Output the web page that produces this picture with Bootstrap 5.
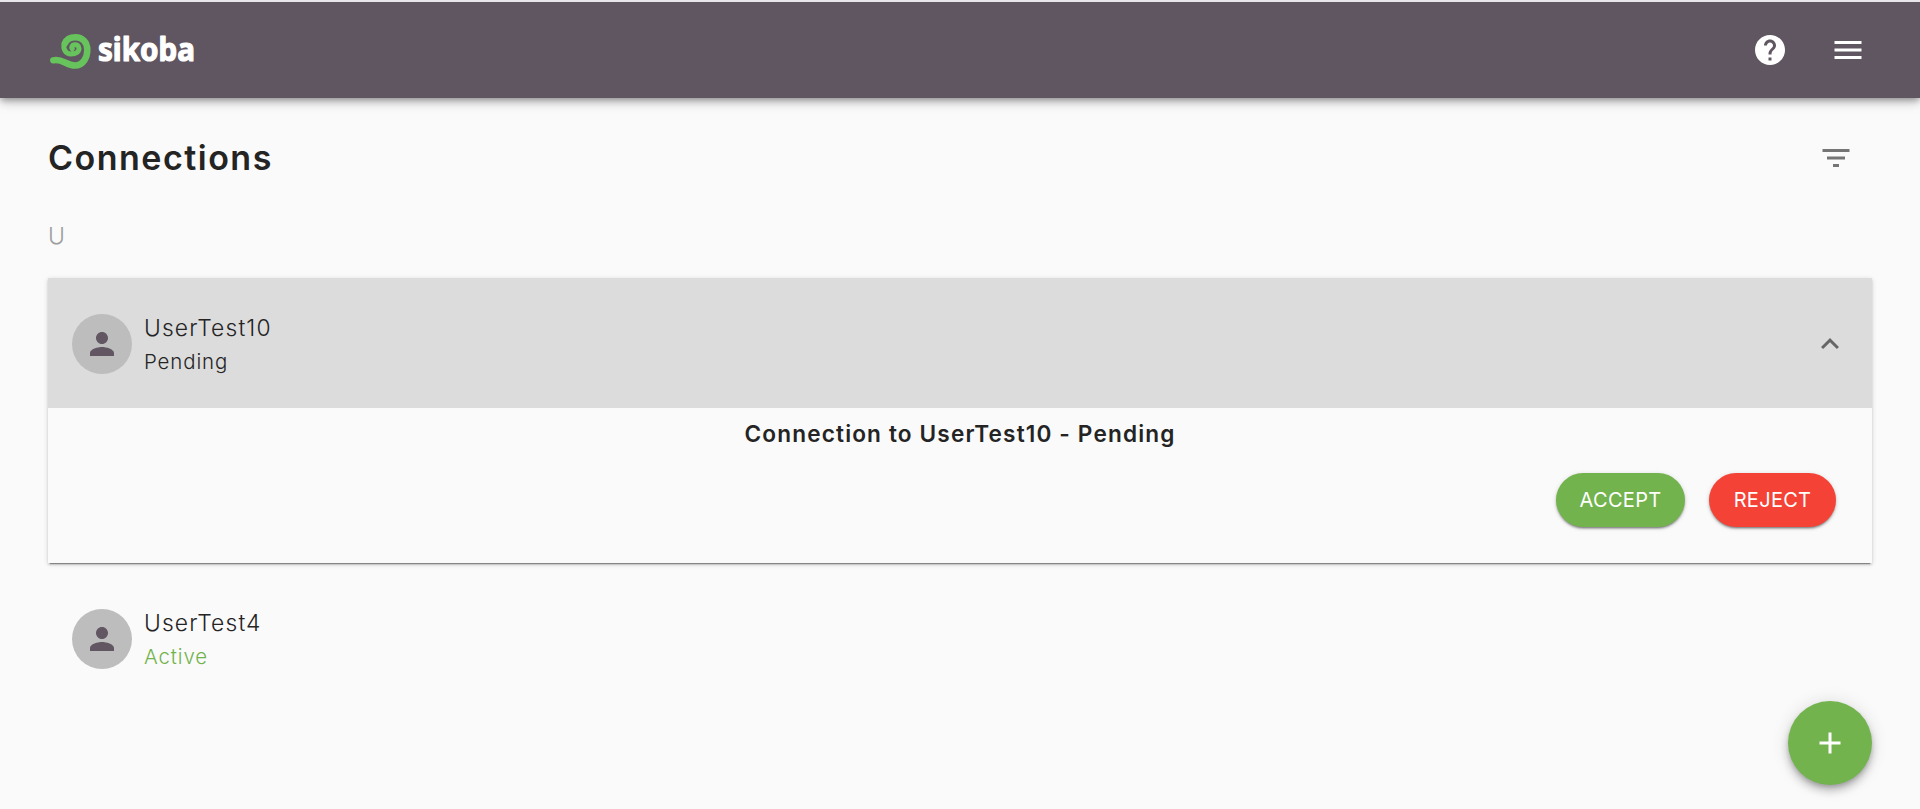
<!DOCTYPE html>
<html lang="en">
<head>
<meta charset="utf-8">
<meta name="viewport" content="width=device-width, initial-scale=1">
<title>Sikoba – Connections</title>
<link href="https://cdn.jsdelivr.net/npm/bootstrap@5.3.0/dist/css/bootstrap.min.css" rel="stylesheet">
<style>
body{background:#fafafa;color:#242424;font-family:Inter,"Noto Sans",sans-serif;height:100vh;overflow:hidden}
.icon36{width:36px;height:36px;fill:currentColor;display:block;flex:none}
.app-bar{height:98px;border-top:2px solid #e8e6ea;background:#605661;color:#fff;padding:0 54px 0 48px;
  box-shadow:0 3px 6px -1px rgba(0,0,0,.3),0 6px 10px rgba(0,0,0,.12),0 1px 12px rgba(0,0,0,.1)}
.app-bar .actions{gap:42px}
.brand-logo{width:150px;height:64px;display:block;overflow:visible}
.brand-logo text{font-family:"Noto Sans",sans-serif;font-weight:700;font-size:33px;fill:#fff;stroke:#fff;stroke-width:1.2;stroke-linejoin:round}
.page{padding:0 48px}
.title-row{height:120px;padding-right:18px}
.page-title{font-size:34px;font-weight:600;letter-spacing:1.5px;line-height:40px}
.filter-btn{color:#757575}
.group-letter{font-size:23px;line-height:36px;color:#9e9e9e;font-weight:300;height:60px}
.panel-open{box-shadow:0 3px 1px -2px rgba(0,0,0,.35),0 2px 2px rgba(0,0,0,.12),0 1px 5px rgba(0,0,0,.14);height:285px}
.panel-head{height:130px;background:#dcdcdc;padding:2px 24px 0}
.panel-row{height:152px;padding:0 24px}
.avatar{width:60px;height:60px;background:#bdbdbd;color:#615662;margin-right:12px;flex:none}
.person-text{padding-top:2px}
.person-name{font-size:22.8px;line-height:33px;font-weight:300;letter-spacing:1.15px}
.person-state{font-size:20.4px;line-height:35px;font-weight:300;letter-spacing:.9px}
.is-active{color:#72b34d}
.chevron{color:#666}
.detail-title{font-size:22.6px;line-height:36px;font-weight:600;letter-spacing:1.15px;padding-top:8px}
.pill{height:54px;border-radius:27px;border:0;color:#fff;font-size:20px;letter-spacing:.3px;padding:0;
  box-shadow:0 3px 1px -2px rgba(0,0,0,.2),0 2px 2px rgba(0,0,0,.24),0 1px 5px rgba(0,0,0,.14)}
.pill-accept{background:#72b34d;width:129px}
.pill-reject{background:#f44336;width:127px}
.detail-actions{gap:24px;padding:21px 36px 0}
.fab{right:48px;bottom:24px;width:84px;height:84px;background:#72b34d;color:#fff;border:0;
  box-shadow:0 3px 5px -1px rgba(0,0,0,.2),0 6px 10px rgba(0,0,0,.2),0 1px 18px rgba(0,0,0,.12)}
</style>
</head>
<body>
<header class="app-bar d-flex align-items-center justify-content-between">
  <svg class="brand-logo" viewBox="48 18 150 64" role="img" aria-label="sikoba">
    <g fill="none" stroke="#67c35c" stroke-linecap="round" stroke-linejoin="round">
      <path stroke-width="6.500" d="M53.300 60.300 C62 58 66 65.500 75 65.500 C83.500 65.500 87.300 57 87.300 50 C87.300 42 82 37.200 75.500 37.200 C70 37.200 66.200 40 64.800 43.500"/>
      <path stroke-width="5" d="M64.800 42.500 C62.200 48.500 65.500 54 71 54 C76 54 79 51.500 79 48.500 C79 45.500 76.500 44.600 74.500 44.800 C72 45 71 47.200 72.300 48.800"/>
    </g>
    <text x="98" y="60.500" textLength="97" lengthAdjust="spacingAndGlyphs">sikoba</text>
  </svg>
  <div class="actions d-flex align-items-center">
    <svg class="icon36" viewBox="0 0 24 24"><path d="M12 2C6.480 2 2 6.480 2 12s4.480 10 10 10 10-4.480 10-10S17.520 2 12 2zm1 17h-2v-2h2v2zm2.070-7.750l-.9.920C13.450 12.900 13 13.500 13 15h-2v-.5c0-1.100.45-2.100 1.170-2.830l1.240-1.260c.37-.36.59-.86.59-1.410 0-1.100-.9-2-2-2s-2 .9-2 2H8c0-2.210 1.790-4 4-4s4 1.790 4 4c0 .88-.36 1.680-.93 2.250z"/></svg>
    <svg class="icon36" viewBox="0 0 24 24"><path d="M3 18h18v-2H3v2zm0-5h18v-2H3v2zm0-7v2h18V6H3z"/></svg>
  </div>
</header>
<main class="page">
  <div class="title-row d-flex align-items-center justify-content-between">
    <h1 class="page-title mb-0">Connections</h1>
    <svg class="icon36 filter-btn" viewBox="0 0 24 24"><path d="M10 18h4v-2h-4v2zM3 6v2h18V6H3zm3 7h12v-2H6v2z"/></svg>
  </div>
  <div class="group-letter">U</div>
  <section class="panel-open">
    <div class="panel-head d-flex align-items-center">
      <div class="avatar rounded-circle d-flex align-items-center justify-content-center">
        <svg class="icon36" viewBox="0 0 24 24"><path d="M12 12c2.210 0 4-1.790 4-4s-1.790-4-4-4-4 1.790-4 4 1.790 4 4 4zm0 2c-2.670 0-8 1.340-8 4v2h16v-2c0-2.660-5.330-4-8-4z"/></svg>
      </div>
      <div class="person-text flex-grow-1">
        <div class="person-name">UserTest10</div>
        <div class="person-state">Pending</div>
      </div>
      <svg class="icon36 chevron" viewBox="0 0 24 24"><path d="M12 8l-6 6 1.410 1.410L12 10.830l4.590 4.580L18 14z"/></svg>
    </div>
    <div class="detail-title text-center">Connection to UserTest10 - Pending</div>
    <div class="detail-actions d-flex justify-content-end">
      <button class="btn pill pill-accept">ACCEPT</button>
      <button class="btn pill pill-reject">REJECT</button>
    </div>
  </section>
  <section class="panel-row d-flex align-items-center">
    <div class="avatar rounded-circle d-flex align-items-center justify-content-center">
      <svg class="icon36" viewBox="0 0 24 24"><path d="M12 12c2.210 0 4-1.790 4-4s-1.790-4-4-4-4 1.790-4 4 1.790 4 4 4zm0 2c-2.670 0-8 1.340-8 4v2h16v-2c0-2.660-5.330-4-8-4z"/></svg>
    </div>
    <div class="person-text">
      <div class="person-name">UserTest4</div>
      <div class="person-state is-active">Active</div>
    </div>
  </section>
</main>
<button class="fab position-fixed rounded-circle d-flex align-items-center justify-content-center" aria-label="Add connection">
  <svg class="icon36" viewBox="0 0 24 24"><path d="M19 13h-6v6h-2v-6H5v-2h6V5h2v6h6v2z"/></svg>
</button>
<script src="https://cdn.jsdelivr.net/npm/bootstrap@5.3.0/dist/js/bootstrap.bundle.min.js"></script>
</body>
</html>
